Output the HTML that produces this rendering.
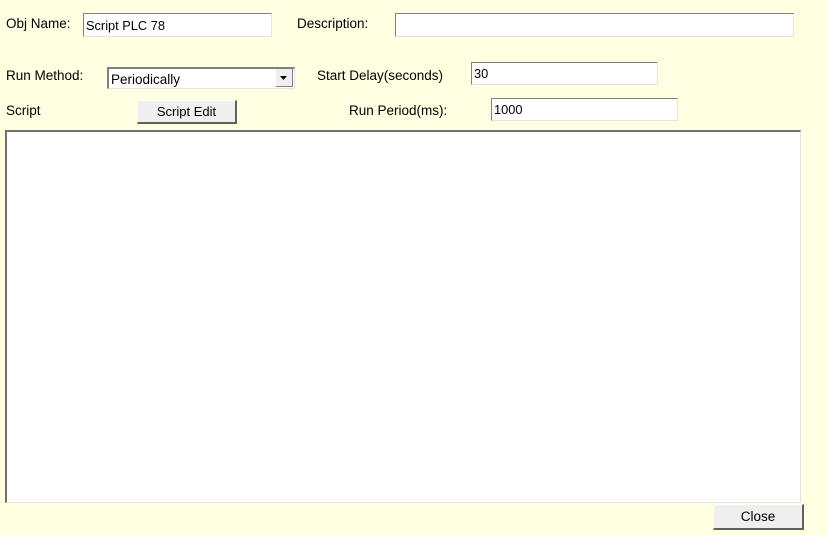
<!DOCTYPE html>
<html><head><style>
body{margin:0;width:828px;height:535px;background:#FFFFE1;font-family:"Liberation Sans",sans-serif;font-size:13.5px;color:#000;position:relative;overflow:hidden}
.a{position:absolute}
.l{position:absolute;white-space:nowrap}
.in{position:absolute;background:#fff;border-top:1px solid #808080;border-left:1px solid #808080;border-right:1px solid #e3e3e3;border-bottom:1px solid #e3e3e3;box-sizing:border-box;padding:2px 2px;white-space:nowrap;font-size:12.8px}
.btn{position:absolute;background:#efefef;border-top:1px solid #fff;border-left:1px solid #fff;border-right:2px solid #606060;border-bottom:2px solid #606060;box-sizing:border-box;text-align:center;font-size:13px}
</style></head><body>
<div class="l" style="left:6px;top:16px">Obj Name:</div>
<div class="in" style="left:83px;top:13px;width:189px;height:24px;padding-top:4px">Script PLC 78</div>
<div class="l" style="left:297px;top:16px">Description:</div>
<div class="in" style="left:395px;top:13px;width:399px;height:24px"></div>

<div class="l" style="left:6px;top:68px">Run Method:</div>
<div class="in" style="left:107px;top:67px;width:188px;height:22px;border-top:2px solid #808080;border-left:2px solid #808080;padding:3px 2px;font-size:13.5px">Periodically</div>
<div class="a" style="left:276px;top:69px;width:17px;height:18px;background:#efefef;border-right:1px solid #808080;border-bottom:1px solid #808080;box-sizing:border-box">
<svg width="16" height="17" style="position:absolute;left:0;top:0"><path d="M4 7h7l-3.5 4z" fill="#000"/></svg></div>

<div class="l" style="left:317px;top:68px">Start Delay(seconds)</div>
<div class="in" style="left:471px;top:62px;width:187px;height:23px;padding-top:3px">30</div>

<div class="l" style="left:6px;top:103px">Script</div>
<div class="btn" style="left:137px;top:100px;width:100px;height:24px;line-height:21px">Script Edit</div>
<div class="l" style="left:349px;top:103px">Run Period(ms):</div>
<div class="in" style="left:491px;top:98px;width:187px;height:23px;padding-top:3px">1000</div>

<div class="a" style="left:5px;top:130px;width:796px;height:373px;background:#fff;border-top:2px solid #707070;border-left:2px solid #707070;border-right:1px solid #e3e3e3;border-bottom:1px solid #e3e3e3;box-sizing:border-box"></div>

<div class="btn" style="left:713px;top:504px;width:91px;height:26px;line-height:23px;font-size:13.5px">Close</div>
</body></html>
